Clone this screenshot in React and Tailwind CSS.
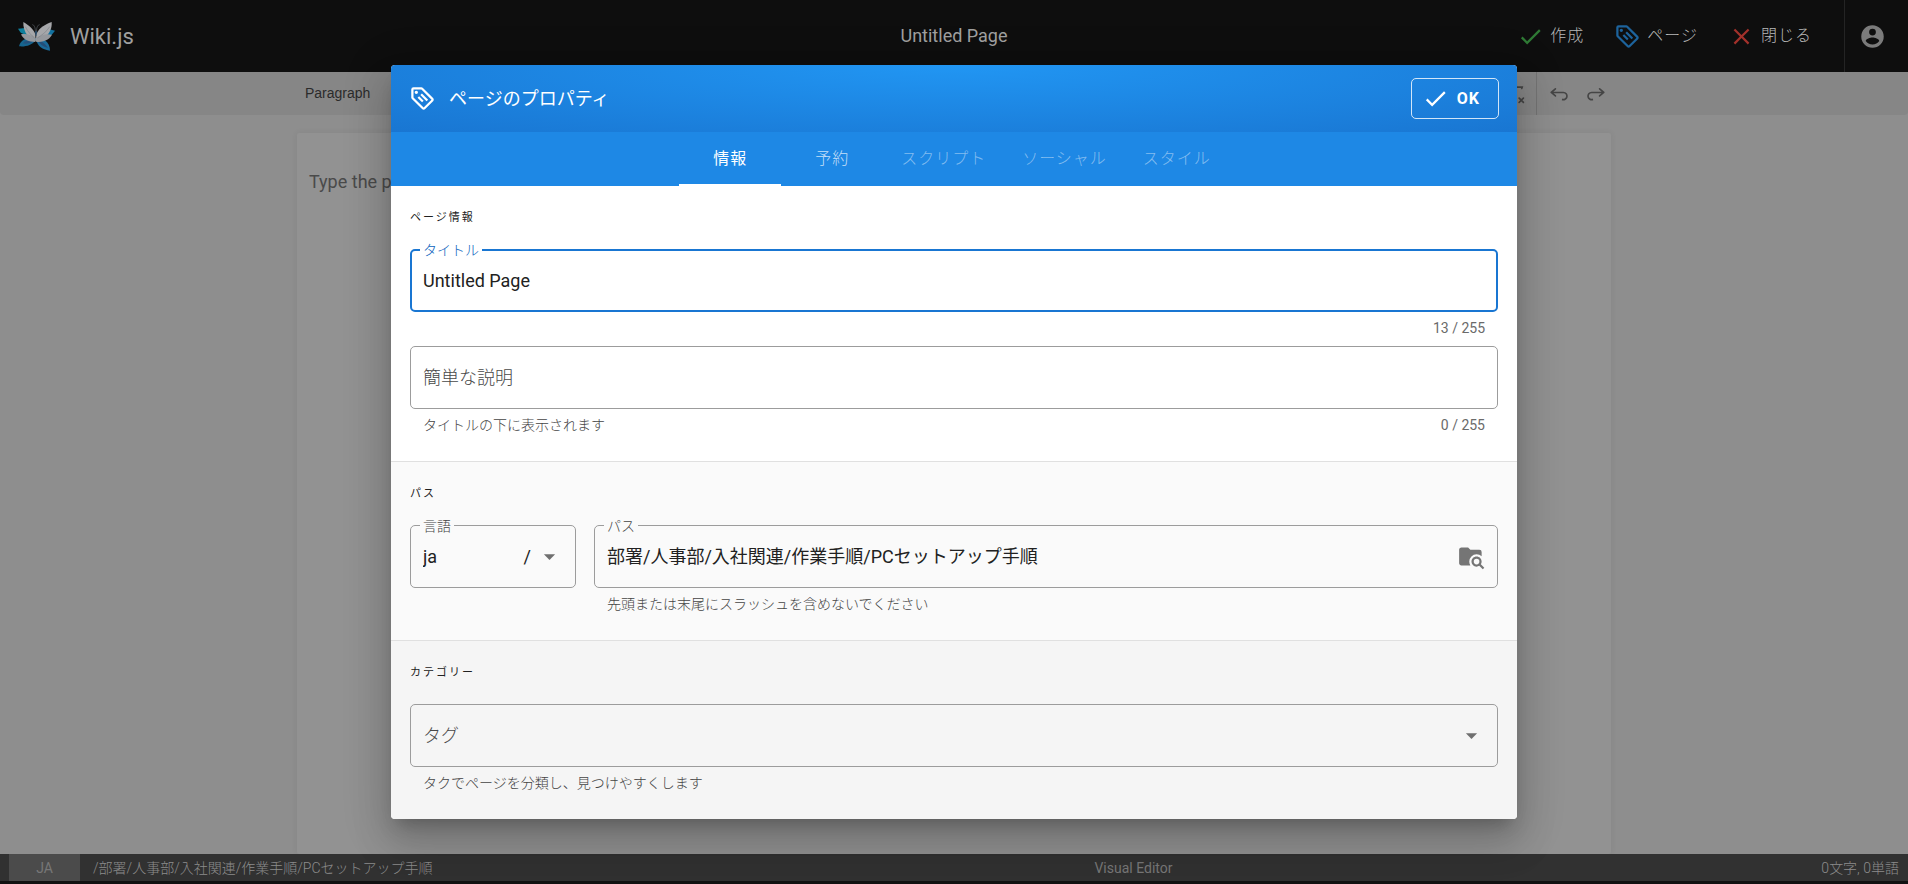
import { useState } from 'react'

const PATHS = {
  tag: 'M21.41 11.58L12.41 2.58A2 2 0 0 0 11 2H4A2 2 0 0 0 2 4V11A2 2 0 0 0 2.59 12.42L11.59 21.42A2 2 0 0 0 13 22A2 2 0 0 0 14.41 21.41L21.41 14.41A2 2 0 0 0 22 13A2 2 0 0 0 21.41 11.58M13 20L4 11V4H11L20 13M6.5 5A1.5 1.5 0 1 1 5 6.5A1.5 1.5 0 0 1 6.5 5M10.09 8.91L11.5 7.5L17 13L15.59 14.41M7.59 11.41L9 10L13 14L11.59 15.41Z',
  check: 'M21,7L9,19L3.5,13.5L4.91,12.09L9,16.17L19.59,5.59L21,7Z',
  close:
    'M19,6.41L17.59,5L12,10.59L6.41,5L5,6.41L10.59,12L5,17.59L6.41,19L12,13.41L17.59,19L19,17.59L13.41,12L19,6.41Z',
  account:
    'M12,19.2C9.5,19.2 7.29,17.92 6,16C6.03,14 10,12.9 12,12.9C14,12.9 17.97,14 18,16C16.71,17.92 14.5,19.2 12,19.2M12,5A3,3 0 0,1 15,8A3,3 0 0,1 12,11A3,3 0 0,1 9,8A3,3 0 0,1 12,5M12,2A10,10 0 0,0 2,12A10,10 0 0,0 12,22A10,10 0 0,0 22,12C22,6.47 17.5,2 12,2Z',
  folderSearch:
    'M16.5,12C19,12 21,14 21,16.5C21,17.38 20.75,18.21 20.31,18.9L23.39,22L22,23.39L18.88,20.32C18.19,20.75 17.37,21 16.5,21C14,21 12,19 12,16.5C12,14 14,12 16.5,12M16.5,14A2.5,2.5 0 0,0 14,16.5A2.5,2.5 0 0,0 16.5,19A2.5,2.5 0 0,0 19,16.5A2.5,2.5 0 0,0 16.5,14M9,4L11,6H19A2,2 0 0,1 21,8V11.81C19.83,10.69 18.25,10 16.5,10A6.5,6.5 0 0,0 10,16.5C10,17.79 10.37,19 11,20H3C1.89,20 1,19.1 1,18V6C1,4.89 1.89,4 3,4H9Z',
  menuDown: 'M7,10L12,15L17,10H7Z',
}

const UNDO =
  'm5.042 9.367 2.189 1.837a.75.75 0 0 1-.965 1.149l-3.788-3.18a.747.747 0 0 1-.21-.284.75.75 0 0 1 .17-.945L6.23 4.762a.75.75 0 1 1 .964 1.15L4.863 7.866h8.917A.75.75 0 0 1 14 7.9a4 4 0 1 1-1.477 7.718l.344-1.489a2.5 2.5 0 1 0 1.094-4.73l.008-.032H5.042z'

const REMOVE_FORMAT =
  'M8.69 14.915c.053.052.173.083.36.093a.366.366 0 0 1 .345.485l-.003.01a.738.738 0 0 1-.697.497h-2.67a.374.374 0 0 1-.353-.496l.013-.038a.681.681 0 0 1 .644-.458c.197-.012.325-.043.386-.093a.28.28 0 0 0 .072-.11L9.592 4.5H6.269c-.359-.017-.609.013-.75.09-.142.078-.289.265-.442.563-.192.29-.516.464-.864.464H4.17a.43.43 0 0 1-.407-.569L4.46 3h13.08l-.62 2.043a.81.81 0 0 1-.775.574h-.114a.486.486 0 0 1-.486-.486c.001-.284-.054-.464-.167-.54-.112-.076-.367-.106-.766-.091h-3.28l-2.68 10.257c-.006.074.007.127.038.158zM3 17h8a.5.5 0 1 1 0 1H3a.5.5 0 1 1 0-1zm11.299 1.17a.75.75 0 1 1-1.06-1.06l1.414-1.415-1.415-1.414a.75.75 0 0 1 1.06-1.06l1.415 1.414 1.414-1.415a.75.75 0 1 1 1.06 1.06l-1.413 1.415 1.414 1.415a.75.75 0 0 1-1.06 1.06l-1.415-1.414-1.414 1.414z'

function Icon({ name, className = '' }) {
  return (
    <svg viewBox="0 0 24 24" aria-hidden="true" className={`size-[27px] shrink-0 fill-current ${className}`}>
      <path d={PATHS[name]} />
    </svg>
  )
}

function Logo() {
  return (
    <svg viewBox="0 0 111 87" aria-hidden="true" className="h-[29px] w-[37px] shrink-0">
      <path d="M0 20 L22 18 L34 44 L8 32 Z" fill="#0f7f9c" />
      <path d="M111 26 L88 20 L74 44 L100 40 Z" fill="#1272a0" />
      <path d="M54 48 C32 46 8 50 3 73 C22 75 42 70 54 54 Z" fill="#17658f" />
      <path d="M14 64 C26 54 38 52 50 52 C44 62 30 68 14 64 Z" fill="#24507c" />
      <path d="M54 48 C74 48 96 58 96 86 C76 84 58 74 54 52 Z" fill="#1b6a99" />
      <path d="M60 54 C74 58 84 68 90 78 C74 74 64 66 60 54 Z" fill="#254e78" />
      <path d="M16 0 C30 8 44 18 52 36 L53 58 C36 54 14 30 16 0 Z" fill="#a6a7aa" />
      <path d="M101 0 C84 6 64 16 55 36 L54 58 C74 56 104 34 101 0 Z" fill="#a6a7aa" />
      <path d="M9 37 C24 34 42 38 53 50 L52 60 C34 60 16 54 9 37 Z" fill="#95989d" />
      <path d="M102 38 C84 34 66 38 54 50 L55 60 C74 60 94 54 102 38 Z" fill="#95989d" />
      <path d="M22 14 C30 30 40 40 50 48 M95 14 C86 30 70 40 58 48" stroke="#7f8389" strokeWidth="2" fill="none" />
      <path d="M52 28 C52 16 48 8 43 8 M56 28 C55 16 60 8 65 8" stroke="#5b6066" strokeWidth="2" fill="none" />
      <path d="M51 28 H57 L55 42 H53 Z" fill="#30587a" />
    </svg>
  )
}

function HeaderButton({ icon, color, children }) {
  return (
    <button type="button" className="flex items-center gap-[6px] px-[15px] text-base tracking-[1px] text-[#b8b8b8]">
      <Icon name={icon} className={color} />
      <span className="font-light">{children}</span>
    </button>
  )
}

function Field({ id, label, active, bg = '', className = '', children }) {
  const frame = active ? 'border-2 border-[#1976d2] px-[11px]' : 'border border-[#9c9c9c] px-3'
  return (
    <div className={`relative flex h-[63px] items-center rounded-[5px] ${frame} ${className}`}>
      {label && (
        <label
          htmlFor={id}
          className={`absolute -translate-y-1/2 px-[3px] text-sm leading-4 font-light ${bg} ${
            active ? '-top-px left-[8px] text-[#0b63bd]' : 'top-0 left-[9px] text-[#444]'
          }`}
        >
          {label}
        </label>
      )}
      {children}
    </div>
  )
}

function Details({ hint, count }) {
  return (
    <div className="flex h-[34px] justify-between px-[13px] pt-[6px] text-sm leading-5">
      <span className="font-light text-[#444]">{hint}</span>
      <span className="text-[#6a6a6a]">{count}</span>
    </div>
  )
}

function Section({ title, className = '', children }) {
  return (
    <section className={`px-[19px] pb-[18px] ${className}`}>
      <h3 className="flex h-[63px] items-center pt-[2px] text-[11px] tracking-[2px] text-[#212121]">{title}</h3>
      {children}
    </section>
  )
}

const INPUT =
  'min-w-0 flex-1 bg-transparent text-lg leading-7 outline-none placeholder:font-light placeholder:text-[#484848]'

const TABS = [
  { label: '情報', style: 'text-white border-white' },
  { label: '予約', style: 'font-light text-white/75 border-transparent' },
  { label: 'スクリプト', style: 'font-light text-white/45 border-transparent', disabled: true },
  { label: 'ソーシャル', style: 'font-light text-white/45 border-transparent', disabled: true },
  { label: 'スタイル', style: 'font-light text-white/45 border-transparent', disabled: true },
]

function PropertiesDialog() {
  const [title, setTitle] = useState('Untitled Page')
  const [description, setDescription] = useState('')
  const [path, setPath] = useState('部署/人事部/入社関連/作業手順/PCセットアップ手順')

  return (
    <div
      role="dialog"
      aria-label="ページのプロパティ"
      className="w-full max-w-[1126px] overflow-hidden rounded-[4px] bg-white shadow-[0_11px_15px_-7px_rgba(0,0,0,0.2),0_24px_38px_3px_rgba(0,0,0,0.14),0_9px_46px_8px_rgba(0,0,0,0.12)]"
    >
      <div className="flex h-[67px] items-center bg-[radial-gradient(ellipse_at_top,#2196f3,#1976d2)] px-[18px] text-white">
        <Icon name="tag" />
        <h2 className="ml-[13px] flex-1 text-lg">ページのプロパティ</h2>
        <button
          type="button"
          className="flex h-[41px] items-center gap-2 rounded-[5px] border border-white/80 pl-[10px] pr-[18px] text-base font-bold tracking-[1px]"
        >
          <Icon name="check" />
          OK
        </button>
      </div>

      <div role="tablist" className="flex h-[54px] justify-center bg-[#1e88e5]">
        {TABS.map((t, i) => (
          <button
            key={t.label}
            type="button"
            role="tab"
            aria-selected={i === 0}
            disabled={t.disabled}
            className={`min-w-[102px] border-b-2 px-[18px] pt-[2px] text-base tracking-[1px] ${t.style}`}
          >
            {t.label}
          </button>
        ))}
      </div>

      <Section title="ページ情報">
        <Field id="title" label="タイトル" active bg="bg-white">
          <input
            id="title"
            className={`${INPUT} text-[#212121]`}
            value={title}
            onChange={(e) => setTitle(e.target.value)}
          />
        </Field>
        <Details count={`${title.length} / 255`} />
        <Field>
          <input
            aria-label="簡単な説明"
            placeholder="簡単な説明"
            className={INPUT}
            value={description}
            onChange={(e) => setDescription(e.target.value)}
          />
        </Field>
        <Details hint="タイトルの下に表示されます" count={`${description.length} / 255`} />
      </Section>

      <Section title="パス" className="border-t border-[#e0e0e0] bg-[#fafafa]">
        <div className="flex gap-[18px]">
          <Field id="locale" label="言語" bg="bg-[#fafafa]" className="w-[166px] shrink-0">
            <select id="locale" className={`${INPUT} appearance-none text-[#212121]`}>
              <option>ja</option>
            </select>
            <span className="text-lg text-[#212121]">/</span>
            <Icon name="menuDown" className="pointer-events-none ml-[5px] text-[#6f6f6f]" />
          </Field>
          <div className="min-w-0 flex-1">
            <Field id="path" label="パス" bg="bg-[#fafafa]" className="w-full">
              <input
                id="path"
                className={`${INPUT} text-[#212121]`}
                value={path}
                onChange={(e) => setPath(e.target.value)}
              />
              <button type="button" aria-label="フォルダーを選択">
                <Icon name="folderSearch" className="text-[#757575]" />
              </button>
            </Field>
            <Details hint="先頭または末尾にスラッシュを含めないでください" />
          </div>
        </div>
      </Section>

      <Section title="カテゴリー" className="border-t border-[#e0e0e0] bg-[#f5f5f5]">
        <Field>
          <input aria-label="タグ" placeholder="タグ" className={INPUT} />
          <button type="button" aria-label="タグの一覧">
            <Icon name="menuDown" className="text-[#6f6f6f]" />
          </button>
        </Field>
        <Details hint="タクでページを分類し、見つけやすくします" />
      </Section>
    </div>
  )
}

export default function App() {
  return (
    <div className="relative flex min-h-screen flex-col bg-[#8e8e8e] font-['Roboto','Noto_Sans_CJK_JP',sans-serif]">
      <header className="grid h-[72px] grid-cols-[1fr_auto_1fr] bg-[#0e0e0e] text-[#a0a0a0]">
        <div className="flex items-center gap-[15px] pl-[18px]">
          <Logo />
          <span className="text-[22px]">Wiki.js</span>
        </div>
        <div className="flex items-center text-lg">Untitled Page</div>
        <div className="flex justify-end">
          <HeaderButton icon="check" color="text-[#2f7a35]">作成</HeaderButton>
          <HeaderButton icon="tag" color="text-[#1d639c]">ページ</HeaderButton>
          <HeaderButton icon="close" color="text-[#a3312b]">閉じる</HeaderButton>
          <div className="ml-[17px] flex w-16 items-center justify-center border-l border-[#242424]">
            <button type="button" aria-label="アカウント" className="pr-[8px]">
              <Icon name="account" className="text-[#7b7b7b]" />
            </button>
          </div>
        </div>
      </header>

      <div className="flex h-[43px] justify-center rounded-b-sm bg-[#868686]">
        <div className="flex w-full max-w-[1314px] items-center pr-[4px] pl-[8px] text-[#454545]">
          <button type="button" className="pb-[2px] font-['Liberation_Sans',sans-serif] text-sm text-[#2b2b2b]">
            Paragraph
          </button>
          <button type="button" aria-label="Remove Format" className="ml-auto mr-[10px]">
            <svg viewBox="0 0 20 20" className="size-[22px] fill-current"><path d={REMOVE_FORMAT} /></svg>
          </button>
          <div className="h-full w-px bg-[#747474]" />
          <button type="button" aria-label="Undo" className="ml-[11px]">
            <svg viewBox="0 0 20 20" className="size-[22px] fill-current"><path d={UNDO} /></svg>
          </button>
          <button type="button" aria-label="Redo" className="ml-[15px]">
            <svg viewBox="0 0 20 20" className="size-[22px] -scale-x-100 fill-current"><path d={UNDO} /></svg>
          </button>
        </div>
      </div>

      <main className="flex flex-1 justify-center pt-[18px]">
        <div className="w-full max-w-[1314px] rounded-[2px] bg-[#929292] px-3 pt-[35px] text-lg leading-7 text-[#4a4a4a] shadow-[0_0_6px_rgba(0,0,0,0.07)]">
          Type the page content here
        </div>
      </main>

      <footer className="flex h-[30px] items-center border-b-3 border-[#111] bg-[#313131] px-[9px] text-sm text-[#777]">
        <span className="flex h-full w-[71px] items-center justify-center bg-[#4b4b4b]">JA</span>
        <span className="ml-[13px] font-light text-[#8c8c8c]">/部署/人事部/入社関連/作業手順/PCセットアップ手順</span>
        <span className="ml-[13px] flex-1 text-center">Visual Editor</span>
        <span className="font-light text-[#8c8c8c]">0文字, 0単語</span>
      </footer>

      <div className="absolute inset-0 flex items-center justify-center">
        <PropertiesDialog />
      </div>
    </div>
  )
}
